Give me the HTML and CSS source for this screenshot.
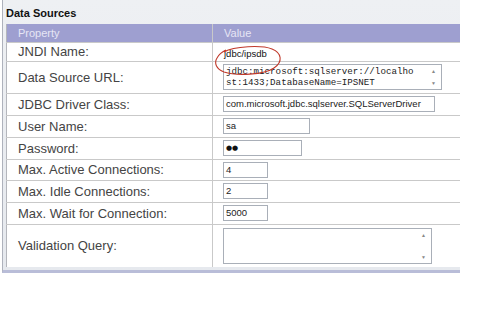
FILE: index.html
```html
<!DOCTYPE html>
<html lang="en">
<head>
<meta charset="UTF-8">
<title>Data Sources</title>
<link rel="stylesheet" href="styles.css">
</head>
<body>

<div class="panel">
  <div class="panel-title">Data Sources</div>

  <table class="props">
    <tr class="head"><th class="col-prop">Property</th><th>Value</th></tr>
    <tr class="row-short">
      <td class="label">JNDI Name:</td>
      <td class="value">
        <span class="plain">jdbc/ipsdb</span>
        <svg class="mark" width="70" height="34" viewBox="0 0 70 34">
          <path d="M10 8 C20 2 48 1 58 5 C68 9 69 18 60 24 C50 31 22 32 10 28 C2 25 0 19 3 14 C5 10 8 8 12 6" fill="none" stroke="#c0392b" stroke-width="1.1"/>
        </svg>
      </td>
    </tr>
    <tr class="row-tall">
      <td class="label">Data Source URL:</td>
      <td class="value">
        <div class="area area-url">
          <div class="area-text">jdbc:microsoft:sqlserver://localho<br>st:1433;DatabaseName=IPSNET</div>
          <div class="area-scroll"><span>▲</span><span>▼</span></div>
        </div>
      </td>
    </tr>
    <tr class="row"><td class="label">JDBC Driver Class:</td><td class="value"><div class="field w-driver">com.microsoft.jdbc.sqlserver.SQLServerDriver</div></td></tr>
    <tr class="row"><td class="label">User Name:</td><td class="value"><div class="field w-user">sa</div></td></tr>
    <tr class="row"><td class="label">Password:</td><td class="value"><div class="field w-pass dots">●●</div></td></tr>
    <tr class="row-s"><td class="label">Max. Active Connections:</td><td class="value"><div class="field w-num">4</div></td></tr>
    <tr class="row"><td class="label">Max. Idle Connections:</td><td class="value"><div class="field w-num">2</div></td></tr>
    <tr class="row"><td class="label">Max. Wait for Connection:</td><td class="value"><div class="field w-num">5000</div></td></tr>
    <tr class="row-query">
      <td class="label">Validation Query:</td>
      <td class="value">
        <div class="area area-query">
          <div class="area-text"></div>
          <div class="area-scroll"><span>▲</span><span>▼</span></div>
        </div>
      </td>
    </tr>
  </table>
</div>

</body>
</html>
```

FILE: styles.css
```css
body { margin: 0; background: #fff; font-family: "Liberation Sans", Arial, sans-serif; }

.panel {
  width: 454px;
  margin-left: 2px;
  padding-left: 3px;
  border-left: 1px solid #aeb2bc;
  border-bottom: 3px solid #b9bdd8;
  padding-bottom: 3px;
  background: linear-gradient(#eef0f3, #e6e9ee);
}
.panel-title { height: 24px; line-height: 27px; font-size: 11px; font-weight: bold; color: #111; }

.props { width: 454px; border-collapse: collapse; background: #fff; border-left: 1px solid #b4b6bc; }
.props th, .props td { padding: 0; text-align: left; border-top: 1px solid #c9c9c9; }
.props th { border-top: 0; }
.props .col-prop, .props .label { width: 194px; border-right: 1px solid #c9c9c9; }

.head { height: 18px; background: #9e9fd0; }
.head th { font-size: 11px; font-weight: normal; color: #e6e6f5; padding-left: 11px; }

.row-short { height: 18px; }
.row-tall { height: 32px; }
.row { height: 22px; }
.row-s { height: 21px; }
.row-query { height: 43px; }

.label { font-size: 13px; color: #444; padding-left: 11px !important; }
.value { padding-left: 10px !important; position: relative; }

.plain { font-size: 9.5px; color: #111; padding-left: 1px; }
.mark { position: absolute; left: 1px; top: 1px; overflow: visible; z-index: 2; }

.field {
  box-sizing: border-box;
  height: 16px;
  border: 1px solid #a9afb8;
  padding: 0 2px;
  font-size: 9.5px;
  line-height: 14px;
  color: #222;
  background: #fff;
}
.w-driver { width: 212px; }
.w-user { width: 87px; }
.w-pass { width: 79px; }
.w-num { width: 45px; }
.dots { font-family: "DejaVu Sans", sans-serif; font-size: 7px; color: #111; }

.area { display: flex; box-sizing: border-box; border: 1px solid #a9afb8; background: #fff; }
.area-url { width: 219px; height: 26px; }
.area-query { width: 209px; height: 36px; }
.area-text {
  flex: 1;
  padding: 1px 2px;
  font-family: "Liberation Mono", "Courier New", monospace;
  font-size: 9.2px;
  line-height: 11px;
  color: #222;
}
.area-scroll {
  width: 15px;
  display: flex;
  flex-direction: column;
  justify-content: space-between;
  align-items: center;
  padding: 3px 0;
  font-size: 5px;
  color: #888;
}
```
